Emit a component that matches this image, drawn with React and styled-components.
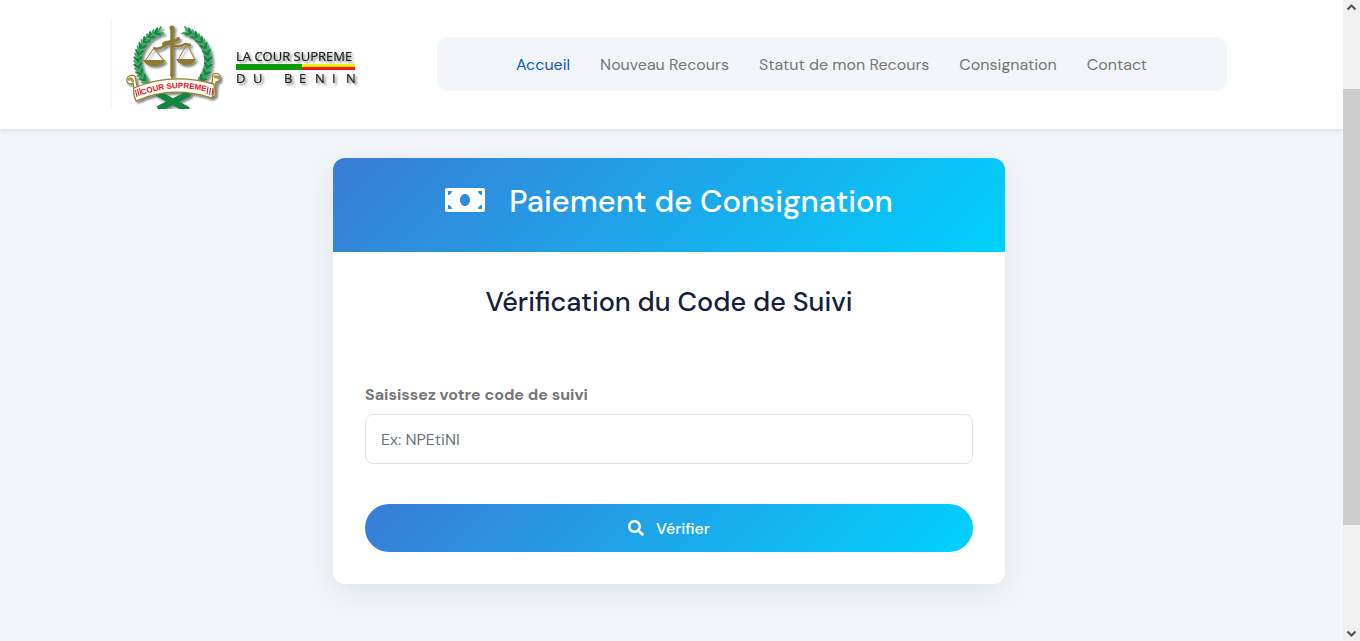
import React from "react";
import styled, { createGlobalStyle } from "styled-components";
import { FaMoneyBill, FaSearch } from "react-icons/fa";

const GlobalStyle = createGlobalStyle`
  *, *::before, *::after { box-sizing: border-box; }
  body {
    margin: 0;
    background: #f2f5fa;
    color: #757575;
    font-family: "DM Sans", Inter, sans-serif;
    font-size: 16px;
    line-height: 24px;
  }
`;

const accent = "linear-gradient(135deg, #3a7bd5 0%, #00d2ff 100%)";

const Page = styled.div`
  display: flex;
  min-height: 100vh;
`;

const Content = styled.div`
  flex: 1;
  min-width: 0;
`;

const Header = styled.header`
  background: #fff;
  box-shadow: 0 2px 5px rgba(0, 0, 0, 0.1);
`;

const HeaderInner = styled.div`
  display: flex;
  align-items: center;
  flex-wrap: wrap;
  max-width: 1140px;
  margin: 0 auto;
  padding: 20px 15px 20px 9px;
`;

const LogoLink = styled.a`
  display: block;
  width: 326px;
  height: 89px;
`;

const Nav = styled.nav`
  flex: 1;
  margin-bottom: 1px;
  padding: 16px 0 14px;
  border-radius: 10px;
  background: #f2f5fa;
`;

const NavList = styled.ul`
  display: flex;
  justify-content: center;
  flex-wrap: wrap;
  gap: 30px;
  margin: 0;
  padding: 0;
  list-style: none;
`;

const NavLink = styled.a`
  color: ${(p) => (p.$active ? "#0a58ca" : "#757575")};
  text-decoration: none;
`;

const Main = styled.main`
  padding: 29px 20px 57px 15px;
`;

const Card = styled.section`
  max-width: 672px;
  margin: 0 auto;
  border-radius: 12px;
  overflow: hidden;
  background: #fff;
  box-shadow: 0 8px 32px rgba(0, 0, 0, 0.08);
`;

const CardHeader = styled.div`
  padding: 25px 24px 31px;
  background: ${accent};
  color: #fff;
`;

const CardTitle = styled.h1`
  display: flex;
  align-items: flex-start;
  justify-content: center;
  gap: 24px;
  margin: 0;
  font-size: 31px;
  font-weight: 500;
  line-height: 38px;

  svg { width: 40px; height: 34px; }
`;

const Form = styled.form`
  padding: 33px 32px 32px;
`;

const FormTitle = styled.h2`
  margin: 0 0 64px;
  color: #14213d;
  font-size: 27px;
  font-weight: 500;
  line-height: 34px;
  text-align: center;
`;

const Label = styled.label`
  display: block;
  margin-bottom: 7px;
  font-weight: 700;
`;

const TextInput = styled.input`
  display: block;
  width: 100%;
  height: 50px;
  padding: 0 15px;
  border: 1px solid #dee2e6;
  border-radius: 8px;
  background: #fff;
  color: #212529;
  font: inherit;

  &::placeholder { color: #6c757d; opacity: 1; }
`;

const SubmitButton = styled.button`
  display: flex;
  align-items: flex-start;
  justify-content: center;
  gap: 12px;
  width: 100%;
  margin-top: 40px;
  padding: 13px 0 11px;
  border: 0;
  border-radius: 24px;
  background: ${accent};
  color: #fff;
  font: inherit;
  font-weight: 500;
  cursor: pointer;

  svg { width: 16px; height: 22px; }
`;

const ScrollTrack = styled.div`
  position: sticky;
  top: 0;
  display: flex;
  flex-direction: column;
  flex: 0 0 17px;
  height: 100vh;
  background: #f0f0f0;
`;

const ScrollArrow = styled.svg`
  flex: 0 0 17px;
  width: 17px;
  height: 17px;
  fill: none;
  stroke: #505050;
  stroke-width: 2;
`;

const ScrollGap = styled.div`
  flex: ${(p) => p.$share} 0 0;
`;

const ScrollThumb = styled.div`
  flex: 436 0 0;
  background: #cdcdcd;
`;

const leafSteps = Array.from({ length: 19 }, (_, i) => i);

function Branch() {
  return (
    <g>
      <path d="M47 11C31 17 24 31 28 47C30 57 39 68 52 74" fill="none" stroke="#168a43" strokeWidth="2" />
      {leafSteps.map((i) => {
        const t = ((245 - i * 6) * Math.PI) / 180;
        const x = 62 + 35 * Math.cos(t);
        const y = 41 + 32 * Math.sin(t);
        const along = (Math.atan2(-32 * Math.cos(t), 35 * Math.sin(t)) * 180) / Math.PI;
        return (
          <g key={i} transform={`translate(${x} ${y}) rotate(${along + 180})`} fill={i % 2 ? "#128541" : "#3fa566"}>
            <ellipse cx="2.500" cy="-2" rx="3.500" ry="1.200" transform="rotate(-38 2.500 -2)" />
            <ellipse cx="2.500" cy="2" rx="3.500" ry="1.200" transform="rotate(38 2.500 2)" />
          </g>
        );
      })}
    </g>
  );
}

function Logo() {
  return (
    <svg width="250" height="89" viewBox="0 0 250 89" role="img" aria-label="La Cour Suprême du Bénin">
      <defs>
        <filter id="drop" x="-10%" y="-10%" width="125%" height="130%">
          <feDropShadow dx="2" dy="2" stdDeviation="1.2" floodColor="#000" floodOpacity="0.5" />
        </filter>
        <path id="ribbonLine" d="M29 76Q60 63 97 72" />
      </defs>
      <path d="M0.5 0V89" stroke="#f3f3f3" />
      <g filter="url(#drop)">
        <Branch />
        <g transform="translate(124 0) scale(-1 1)">
          <Branch />
        </g>
        <path d="M47 89L79 73M77 90L46 73" stroke="#128541" strokeWidth="6" />
        <g fill="none" stroke="#8f7a35" strokeLinejoin="round">
          <path d="M61 8V56" strokeWidth="3.500" />
          <path d="M42 28Q48 30 53 26Q57 22 61 25Q68 28 74 24L80 25" strokeWidth="2.500" />
          <path d="M53 23L67 20" strokeWidth="3" />
          <path d="M43 28L34 41M43 28L53 41M76 24L67 40M76 24L84 40" strokeWidth="1" />
        </g>
        <g fill="#8f7a35">
          <circle cx="61" cy="8" r="2.500" />
          <circle cx="67" cy="19" r="2" />
          <circle cx="53" cy="24" r="2" />
          <path d="M59 54H63L61 60Z" />
          <path d="M32 40H55Q51 46 43 46Q35 46 32 40ZM65 39H85Q82 45 75 45Q68 45 65 39Z" />
        </g>
        <g fill="#fffdf4" stroke="#93803a" strokeWidth="1.300" strokeLinejoin="round">
          <path d="M26 66L24 56Q17 54 16 59Q15 63 19 64L22 63L25 78L30 80Z" />
          <path d="M101 63L102 54Q108 52 109 57Q109 62 105 62L104 76L98 78Z" />
          <path d="M23 68Q60 52 103 64Q104 70 101 78Q60 65 25 81Q22 75 23 68Z" />
        </g>
        <path d="M17 60Q21 57 22 62M103 57Q107 56 108 59" fill="none" stroke="#b09a48" strokeWidth="3" />
      </g>
      <path d="M24.500 70L26 77M26.500 69L28 76M28.500 68L30 75M97 67L96 74M99.500 68L98.500 75M102 68L101 75" stroke="#d7182b" strokeWidth="1" />
      <text fill="#e0142b" fontFamily="Liberation Sans, sans-serif" fontSize="8" fontWeight="700">
        <textPath href="#ribbonLine" startOffset="50%" textAnchor="middle">COUR SUPREME</textPath>
      </text>
      <g filter="url(#drop)" fill="#1c1c1c" stroke="#1c1c1c" strokeWidth="0.200" fontFamily="Open Sans, sans-serif" fontSize="13">
        <text x="125" y="41">LA COUR SUPREME</text>
        <text y="63" x="125 142 173 188 204 221 235">DUBENIN</text>
      </g>
      <path d="M125 44H191V50H125Z" fill="#0a9a0a" />
      <path d="M191 44H244V47H191Z" fill="#fff200" />
      <path d="M191 47H244V50H191Z" fill="#f01818" />
    </svg>
  );
}

const links = ["Accueil", "Nouveau Recours", "Statut de mon Recours", "Consignation", "Contact"];

export default function App() {
  return (
    <>
      <GlobalStyle />
      <Page>
        <Content>
          <Header>
            <HeaderInner>
              <LogoLink href="#">
                <Logo />
              </LogoLink>
              <Nav>
                <NavList>
                  {links.map((label, i) => (
                    <li key={label}>
                      <NavLink href="#" $active={i === 0}>{label}</NavLink>
                    </li>
                  ))}
                </NavList>
              </Nav>
            </HeaderInner>
          </Header>
          <Main>
            <Card>
              <CardHeader>
                <CardTitle>
                  <FaMoneyBill aria-hidden="true" />
                  Paiement de Consignation
                </CardTitle>
              </CardHeader>
              <Form onSubmit={(e) => e.preventDefault()}>
                <FormTitle>Vérification du Code de Suivi</FormTitle>
                <Label htmlFor="code">Saisissez votre code de suivi</Label>
                <TextInput id="code" type="text" placeholder="Ex: NPEtiNI" />
                <SubmitButton type="submit">
                  <FaSearch aria-hidden="true" />
                  Vérifier
                </SubmitButton>
              </Form>
            </Card>
          </Main>
        </Content>
        <ScrollTrack aria-hidden="true">
          <ScrollArrow viewBox="0 0 17 17"><path d="M4.500 9.500L8.500 5.500L12.500 9.500" /></ScrollArrow>
          <ScrollGap $share={72} />
          <ScrollThumb />
          <ScrollGap $share={99} />
          <ScrollArrow viewBox="0 0 17 17"><path d="M4.500 7.500L8.500 11.500L12.500 7.500" /></ScrollArrow>
        </ScrollTrack>
      </Page>
    </>
  );
}
